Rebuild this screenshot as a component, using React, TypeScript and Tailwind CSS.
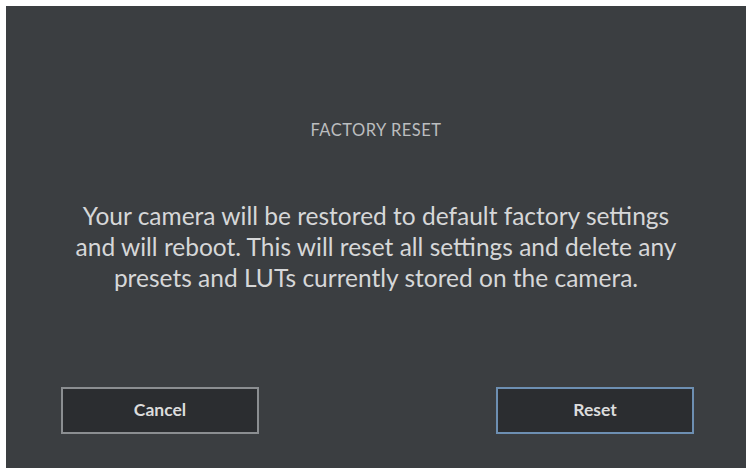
import React from 'react';

export default function App() {
  return (
    <div className="w-[746px] h-[468px] bg-white overflow-hidden pl-[6px] pt-[6px]" style={{ fontFamily: 'Lato, "Open Sans", sans-serif' }}>
      <div className="w-[740px] h-[462px] bg-[#3b3e41] flex flex-col items-center">
        {/* Title */}
        <div className="mt-[112px] h-[24px] leading-[24px] text-[16.5px] tracking-[0.5px] text-[#bbbdbf]">FACTORY RESET</div>

        {/* Message */}
        <p className="mt-[58px] text-center text-[24.5px] leading-[31px] text-[#d6d7d8] whitespace-nowrap">
          Your camera will be restored to default factory settings
          <br />
          and will reboot. This will reset all settings and delete any
          <br />
          presets and LUTs currently stored on the camera.
        </p>

        {/* Actions */}
        <div className="mt-auto mb-[34px] w-full flex justify-between pl-[55px] pr-[52px]">
          <button className="w-[198px] h-[47px] bg-[#2b2d30] border-2 border-[#8b8e91] text-[#dcdcdc] text-[17.5px] font-bold">
            Cancel
          </button>
          <button className="w-[198px] h-[47px] bg-[#2b2d30] border-2 border-[#6d8fb2] text-[#dcdcdc] text-[17.5px] font-bold">
            Reset
          </button>
        </div>
      </div>
    </div>
  );
}
